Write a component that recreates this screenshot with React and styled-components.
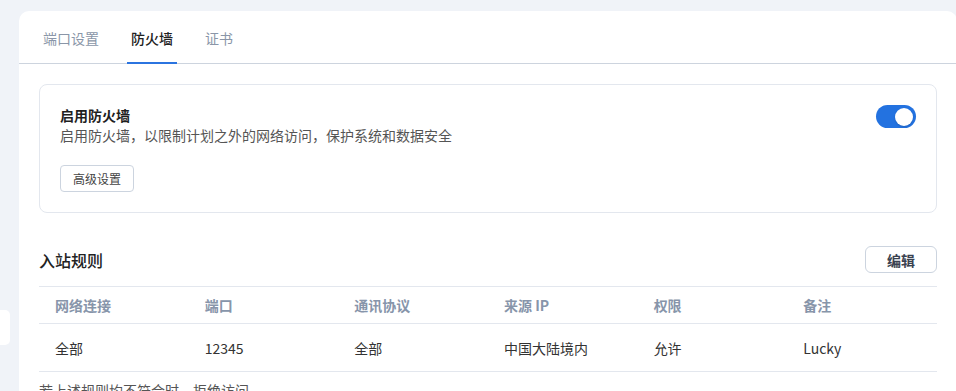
import React, { useState } from "react";
import styled, { createGlobalStyle } from "styled-components";

const GlobalStyle = createGlobalStyle`
    html, body {
        margin: 0;
        padding: 0;
        background: #f0f3f8;
        overflow: hidden;
    }
    body {
        font-family: "Noto Sans CJK SC", "Noto Sans", "Liberation Sans", sans-serif;
        color: #333;
    }
`;

const tabs = ["端口设置", "防火墙", "证书"];

const columns = ["网络连接", "端口", "通讯协议", "来源 IP", "权限", "备注"];

const rules = [["全部", "12345", "全部", "中国大陆境内", "允许", "Lucky"]];

const App = () => {
    const [active, setActive] = useState(1);
    const [enabled, setEnabled] = useState(true);

    return (
        <>
            <GlobalStyle />
            <Page>
                <Side>
                    <SideItem />
                </Side>
                <Card>
                    <TabBar>
                        {tabs.map((t, i) => (
                            <Tab key={t} $active={i === active} onClick={() => setActive(i)}>
                                {t}
                            </Tab>
                        ))}
                    </TabBar>
                    <Content>
                        <Panel>
                            <PanelText>
                                <PanelTitle>启用防火墙</PanelTitle>
                                <PanelDesc>启用防火墙，以限制计划之外的网络访问，保护系统和数据安全</PanelDesc>
                                <SmallButton>高级设置</SmallButton>
                            </PanelText>
                            <Switch $on={enabled} onClick={() => setEnabled(!enabled)}>
                                <Knob />
                            </Switch>
                        </Panel>

                        <SectionHead>
                            <SectionTitle>入站规则</SectionTitle>
                            <EditButton>编辑</EditButton>
                        </SectionHead>

                        <Table>
                            <thead>
                                <tr>
                                    {columns.map((c) => (
                                        <Th key={c}>{c}</Th>
                                    ))}
                                </tr>
                            </thead>
                            <tbody>
                                {rules.map((r, i) => (
                                    <tr key={i}>
                                        {r.map((v, j) => (
                                            <Td key={j}>{v}</Td>
                                        ))}
                                    </tr>
                                ))}
                            </tbody>
                        </Table>
                        <Note>若上述规则均不符合时，拒绝访问</Note>
                    </Content>
                </Card>
            </Page>
        </>
    );
};

const Page = styled.div`
    display: flex;
    align-items: flex-start;
    padding-top: 11px;
    height: 380px;
`;

const Side = styled.div`
    width: 19px;
    flex: none;
    padding-top: 299px;
`;

const SideItem = styled.div`
    width: 10px;
    height: 35px;
    background: #fff;
    border-radius: 0 5px 5px 0;
`;

const Card = styled.div`
    flex: none;
    width: 938px;
    min-height: 400px;
    background: #fff;
    border-radius: 10px 10px 0 0;
`;

const TabBar = styled.div`
    display: flex;
    gap: 24px;
    padding: 0 20px;
    height: 52px;
    border-bottom: 1px solid #cdd4de;
`;

const Tab = styled.div`
    display: flex;
    align-items: center;
    padding: 0 4px;
    padding-top: 2px;
    margin-bottom: -1px;
    font-size: 14px;
    cursor: pointer;
    color: ${(p) => (p.$active ? "#222" : "#8a96a8")};
    font-weight: ${(p) => (p.$active ? 500 : 400)};
    border-bottom: 2px solid ${(p) => (p.$active ? "#2b74e0" : "transparent")};
`;

const Content = styled.div`
    padding: 20px;
`;

const Panel = styled.div`
    display: flex;
    justify-content: space-between;
    align-items: flex-start;
    padding: 20px;
    border: 1px solid #e3e7ee;
    border-radius: 8px;
`;

const PanelText = styled.div`
    display: flex;
    flex-direction: column;
    align-items: flex-start;
`;

const PanelTitle = styled.div`
    font-size: 14px;
    font-weight: 700;
    line-height: 20px;
    color: #1f1f1f;
`;

const PanelDesc = styled.div`
    font-size: 14px;
    line-height: 20px;
    color: #555;
`;

const SmallButton = styled.button`
    margin-top: 20px;
    height: 27px;
    padding: 0 12px;
    font-family: inherit;
    font-size: 12px;
    color: #444;
    background: #fff;
    border: 1px solid #ccd4df;
    border-radius: 4px;
    cursor: pointer;
`;

const Switch = styled.div`
    width: 40px;
    height: 23px;
    border-radius: 12px;
    background: ${(p) => (p.$on ? "#2372e0" : "#c9d0da")};
    display: flex;
    align-items: center;
    justify-content: ${(p) => (p.$on ? "flex-end" : "flex-start")};
    padding: 0 3px;
    box-sizing: border-box;
    cursor: pointer;
`;

const Knob = styled.div`
    width: 18px;
    height: 18px;
    border-radius: 50%;
    background: #fff;
    box-shadow: 0 1px 2px rgba(0, 0, 0, 0.15);
`;

const SectionHead = styled.div`
    display: flex;
    justify-content: space-between;
    align-items: center;
    margin-top: 33px;
    margin-bottom: 13px;
`;

const SectionTitle = styled.div`
    font-size: 16px;
    font-weight: 500;
    color: #222;
`;

const EditButton = styled.button`
    width: 72px;
    height: 27px;
    font-family: inherit;
    font-size: 14px;
    font-weight: 700;
    color: #3a4250;
    background: #fff;
    border: 1px solid #ccd4df;
    border-radius: 6px;
    cursor: pointer;
`;

const Table = styled.table`
    width: 100%;
    border-collapse: collapse;
    table-layout: fixed;
    border-top: 1px solid #e3e7ee;
`;

const Th = styled.th`
    text-align: left;
    height: 36px;
    padding: 0 16px;
    font-size: 14px;
    font-weight: 700;
    color: #8795aa;
    border-bottom: 1px solid #e3e7ee;
`;

const Td = styled.td`
    height: 47px;
    padding: 0 16px;
    font-size: 14px;
    color: #333;
    border-bottom: 1px solid #e3e7ee;
`;

const Note = styled.div`
    margin-top: 8px;
    font-size: 14px;
    color: #555;
`;

export default App;
